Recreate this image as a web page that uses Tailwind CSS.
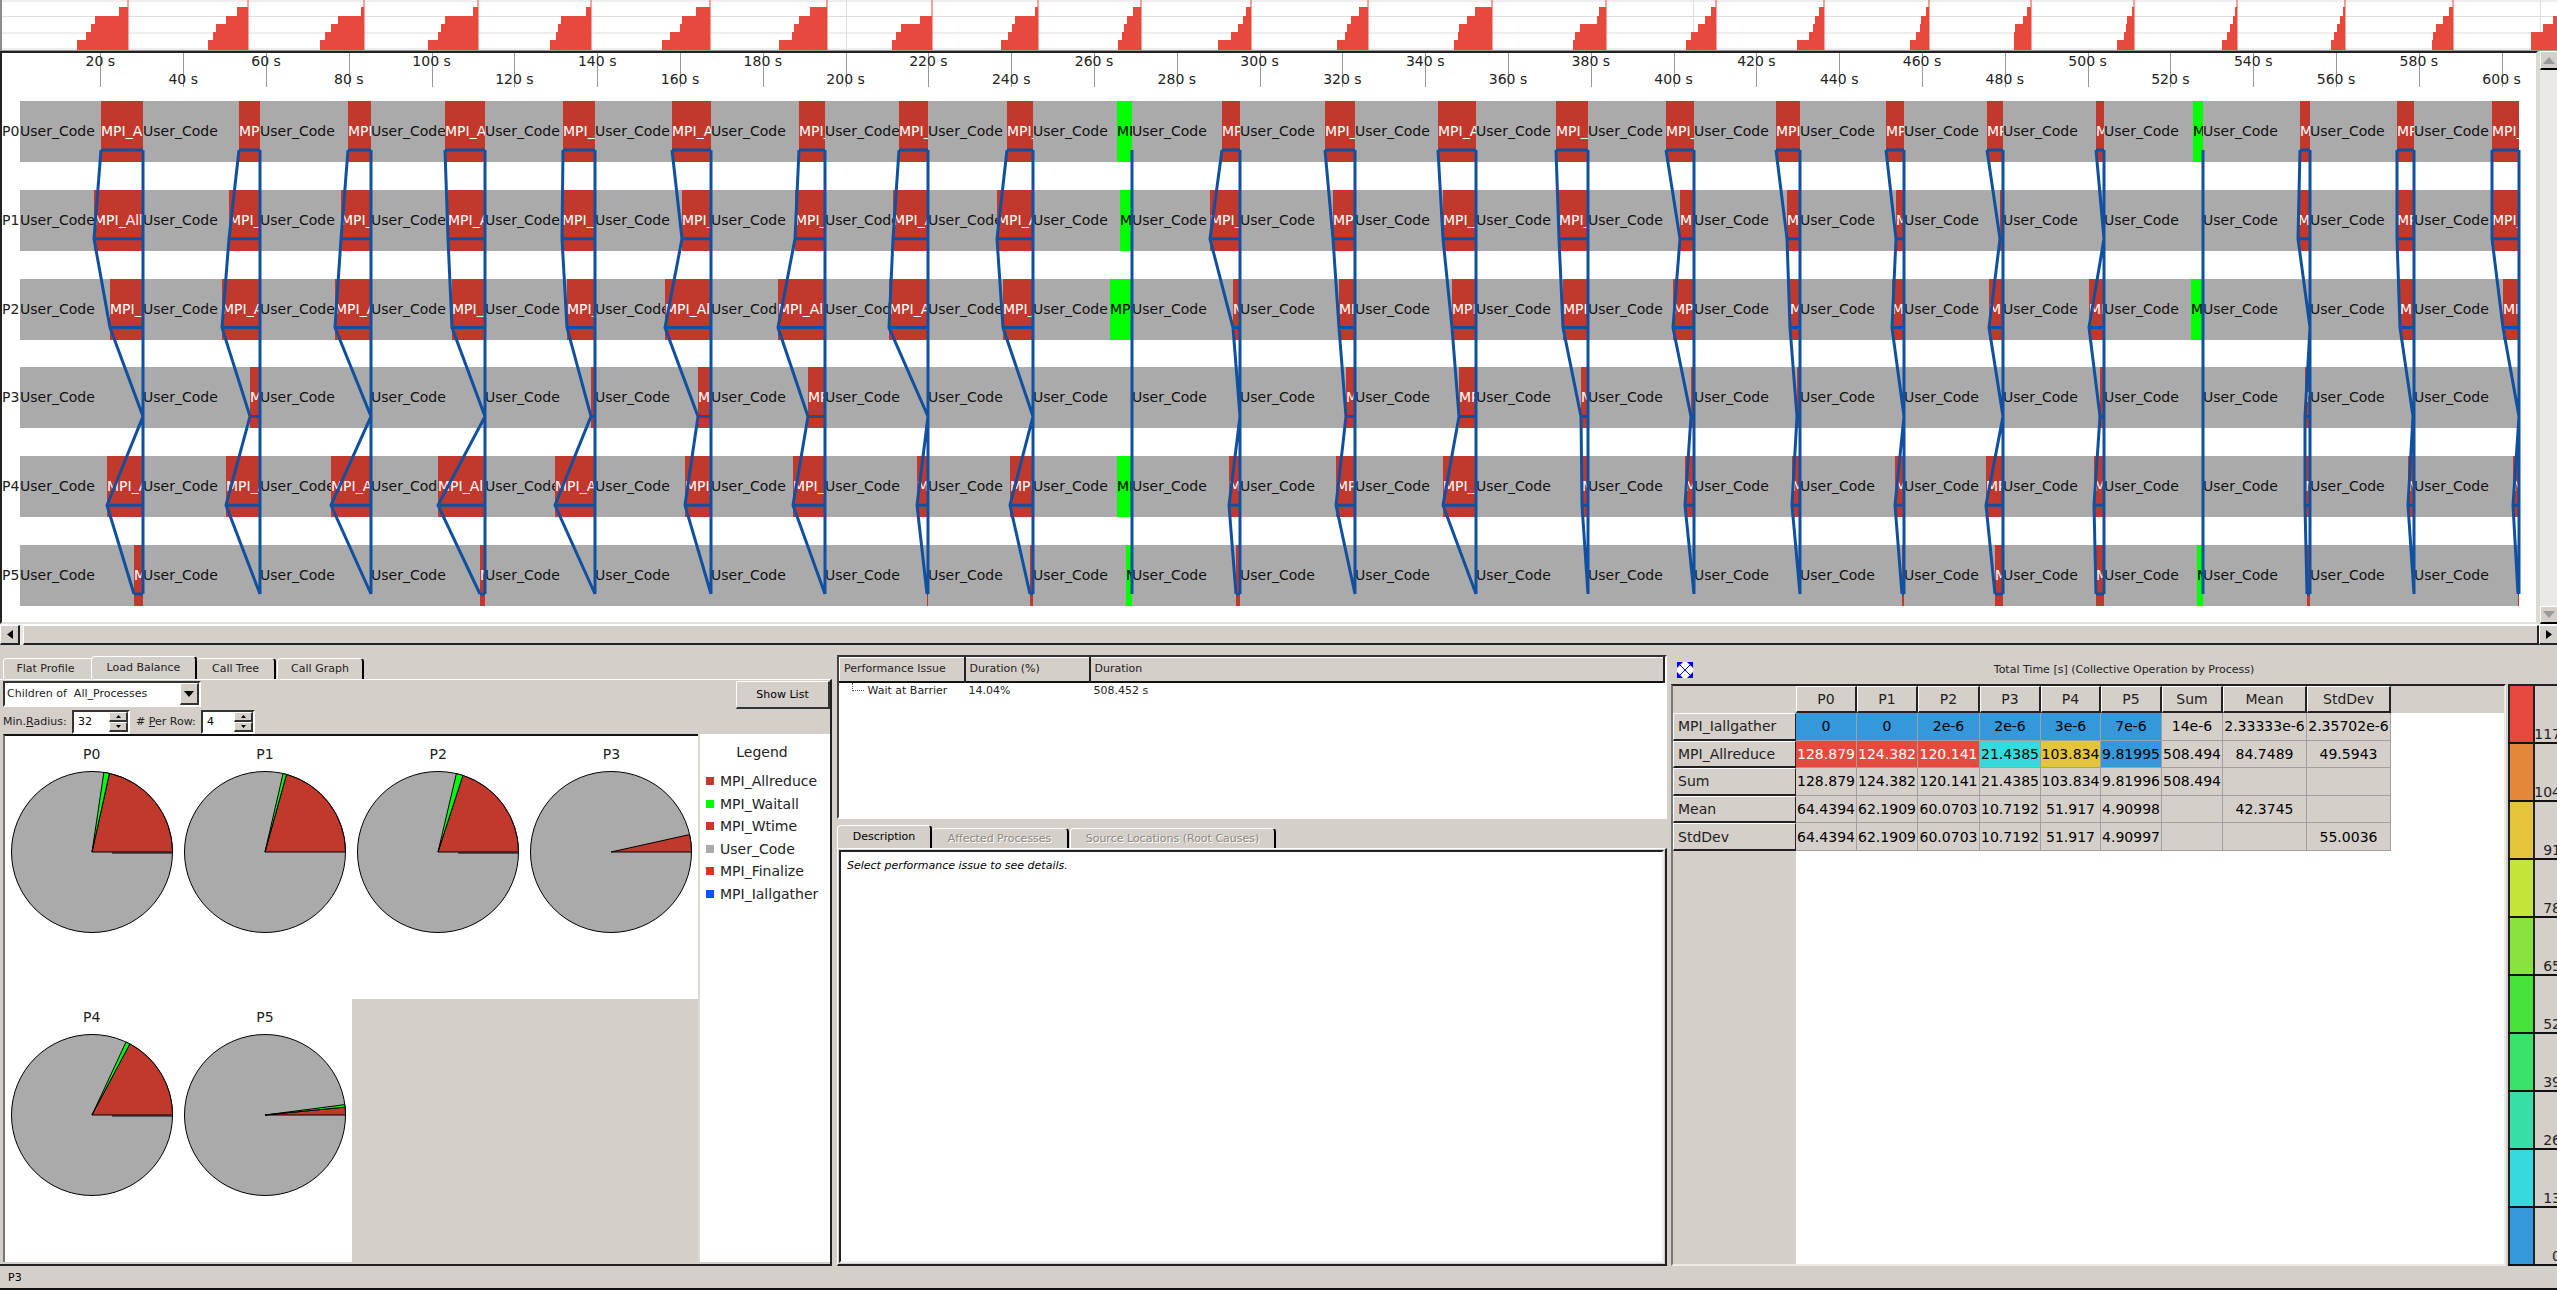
<!DOCTYPE html>
<html lang="en">
<head>
<meta charset="utf-8">
<title>Trace Analyzer</title>
<script src="https://cdn.jsdelivr.net/npm/@tailwindcss/browser@4"></script>
</head>
<body class="flex h-screen flex-col overflow-hidden bg-[#d4cfc8] font-['DejaVu_Sans',sans-serif] text-[11px] leading-4 text-black">

<!-- Load histogram -->
<section aria-label="Histogram" class="h-[51px] shrink-0 border-l-2 border-[#8c8c8c] border-b border-b-[#9a9a9a] bg-white">
  <svg id="histogram" class="block h-full w-full" viewBox="2 0 2555 50" preserveAspectRatio="none"></svg>
</section>

<!-- Event timeline -->
<section aria-label="Event timeline" class="flex h-[573px] shrink-0">
  <div class="relative min-w-0 flex-1 overflow-hidden border-l-2 border-t-2 border-b-2 border-r-2 border-l-[#222] border-t-[#222] border-b-[#e4e1db] border-r-[#dcd9d3] bg-white text-sm leading-4">
    <div id="axis" class="relative h-[48px]"></div>
    <div id="rows" class="flex h-[505px] flex-col justify-between"></div>
    <svg id="arrows" class="absolute inset-0 h-full w-full" viewBox="2 53 2534 569" preserveAspectRatio="none" fill="none" stroke="#1050a0" stroke-width="3"></svg>
  </div>
  <div class="flex w-[19px] flex-col border-l-2 border-[#dcd9d3] bg-[#ebe9e5]">
    <button aria-label="Scroll up" class="flex h-[19px] items-center justify-center border-b-2 border-l border-t border-b-black border-l-white border-t-white bg-[#d4cfc8]"><svg width="12" height="7"><path d="M6 0L12 7H0z" fill="#999"/></svg></button>
    <div class="flex-1"></div>
    <button aria-label="Scroll down" class="flex h-[18px] items-center justify-center border-b-2 border-l border-t border-b-black border-l-white border-t-white bg-[#d4cfc8]"><svg width="12" height="7"><path d="M0 0H12L6 7z" fill="#999"/></svg></button>
  </div>
</section>
<div class="flex h-[21px] shrink-0 border-t border-white">
  <button aria-label="Scroll left" class="flex w-[20px] items-center justify-center border-b-2 border-l border-r-2 border-t border-b-[#222] border-l-white border-r-[#222] border-t-white"><svg width="6" height="9"><path d="M6 0V9L0 4.5z"/></svg></button>
  <div class="w-[3px] bg-[#ebe9e5]"></div>
  <div class="flex-1 border-b-2 border-l border-r-2 border-t border-b-[#222] border-l-white border-r-[#222] border-t-white"></div>
  <button aria-label="Scroll right" class="flex w-[18px] items-center justify-center border-b-2 border-l border-t border-b-[#222] border-l-white border-t-white"><svg width="6" height="9"><path d="M0 0V9L6 4.5z"/></svg></button>
</div>

<!-- Lower panels -->
<main class="flex min-h-0 flex-1">

  <!-- Load balance -->
  <section class="flex w-[832px] shrink-0 flex-col pt-[11px]">
    <div role="tablist" class="flex h-[23px] items-end pl-[3px] text-[#222]">
      <button role="tab" class="h-[21px] w-[88px] rounded-tl border-l border-t border-white pr-1">Flat Profile</button>
      <button role="tab" aria-selected="true" class="h-[23px] w-[106px] rounded-t border-l border-r-2 border-t border-l-white border-r-black border-t-white">Load Balance</button>
      <button role="tab" class="h-[21px] w-[79px] rounded-t border-r-2 border-t border-r-black border-t-white">Call Tree</button>
      <button role="tab" class="ml-px h-[21px] w-[87px] rounded-t border-l border-r-2 border-t border-l-white border-r-black border-t-white">Call Graph</button>
    </div>
    <div class="flex min-h-0 flex-1 flex-col border-b-2 border-r-2 border-t border-b-[#222] border-r-[#222] border-t-white pt-px pl-[3px]">
      <div class="flex h-[28px] items-start justify-between">
        <div class="relative h-[26px] w-[198px] border-2 border-b-white border-l-[#333] border-r-white border-t-[#333] bg-white">
          <select aria-label="Scope" class="h-full w-full appearance-none bg-white pl-0.5 text-[#222]"><option>Children of&nbsp; All_Processes</option></select>
          <span class="pointer-events-none absolute inset-y-0 right-0 flex w-[19px] items-center justify-center border-b-2 border-l border-r-2 border-t border-b-[#333] border-l-white border-r-[#333] border-t-white bg-[#d4cfc8]"><svg width="10" height="6"><path d="M0 0H10L5 6z"/></svg></span>
        </div>
        <button class="h-[28px] w-[94px] border-b-2 border-l border-r-2 border-t border-b-[#333] border-l-white border-r-[#333] border-t-white">Show List</button>
      </div>
      <div class="flex h-[25px] items-center">
        <label for="radius" class="w-[69px] text-[#222]">Min.<u>R</u>adius:</label>
        <div class="flex h-[24px] w-[58px] border-2 border-b-white border-l-[#333] border-r-white border-t-[#333] bg-white">
          <input id="radius" value="32" class="min-w-0 flex-1 pl-1 outline-none">
          <div class="flex w-[19px] flex-col bg-[#d4cfc8]">
            <button aria-label="Increase radius" class="flex flex-1 items-center justify-center border-b-2 border-l border-r-2 border-t border-b-[#333] border-l-white border-r-[#333] border-t-white"><svg width="5" height="3"><path d="M2.500 0L5 3H0z"/></svg></button>
            <button aria-label="Decrease radius" class="flex flex-1 items-center justify-center border-b-2 border-l border-r-2 border-t border-b-[#333] border-l-white border-r-[#333] border-t-white"><svg width="5" height="3"><path d="M0 0H5L2.500 3z"/></svg></button>
          </div>
        </div>
        <label for="perrow" class="ml-1.5 w-[65px] text-[#222]"># <u>P</u>er Row:</label>
        <div class="flex h-[24px] w-[54px] border-2 border-b-white border-l-[#333] border-r-white border-t-[#333] bg-white">
          <input id="perrow" value="4" class="min-w-0 flex-1 pl-1 outline-none">
          <div class="flex w-[19px] flex-col bg-[#d4cfc8]">
            <button aria-label="Increase per row" class="flex flex-1 items-center justify-center border-b-2 border-l border-r-2 border-t border-b-[#333] border-l-white border-r-[#333] border-t-white"><svg width="5" height="3"><path d="M2.500 0L5 3H0z"/></svg></button>
            <button aria-label="Decrease per row" class="flex flex-1 items-center justify-center border-b-2 border-l border-r-2 border-t border-b-[#333] border-l-white border-r-[#333] border-t-white"><svg width="5" height="3"><path d="M0 0H5L2.500 3z"/></svg></button>
          </div>
        </div>
      </div>
      <div class="flex min-h-0 flex-1 pb-0.5">
        <div id="pies" class="grid flex-1 grid-cols-4 grid-rows-2 border-l-2 border-t-2 border-l-[#777] border-t-[#111] text-sm leading-4"></div>
        <aside class="w-[132px] border-l-2 border-[#dcd9d3] bg-white pt-2.5 text-sm leading-4 text-[#222]">
          <h2 class="pr-1.5 text-center">Legend</h2>
          <ul class="mt-2.5 grid h-[135px] grid-rows-6 items-center pl-1.5">
            <li class="flex items-center gap-1.5"><span class="size-2 bg-[#c1392d]"></span>MPI_Allreduce</li>
            <li class="flex items-center gap-1.5"><span class="size-2 bg-[#00ff00]"></span>MPI_Waitall</li>
            <li class="flex items-center gap-1.5"><span class="size-2 bg-[#d03428]"></span>MPI_Wtime</li>
            <li class="flex items-center gap-1.5"><span class="size-2 bg-[#aaaaaa]"></span>User_Code</li>
            <li class="flex items-center gap-1.5"><span class="size-2 bg-[#dc3224]"></span>MPI_Finalize</li>
            <li class="flex items-center gap-1.5"><span class="size-2 bg-[#0055ff]"></span>MPI_Iallgather</li>
          </ul>
        </aside>
      </div>
    </div>
  </section>

  <!-- Performance issues -->
  <section class="flex min-w-0 flex-1 flex-col pt-[10px] pl-[5px] pr-1">
    <div class="h-[164px] border-2 border-b-white border-l-[#444] border-r-white border-t-[#333] bg-white text-[#222]">
      <table class="w-full table-fixed border-collapse">
        <thead>
          <tr class="h-6 border-b-2 border-[#111] bg-[#d4cfc8] text-left">
            <th class="w-[125px] border-r-2 border-l border-t border-l-white border-r-[#222] border-t-white pl-1 font-normal">Performance Issue</th>
            <th class="w-[125px] border-r-2 border-t border-r-[#222] border-t-white pl-1 font-normal">Duration (%)</th>
            <th class="border-r-2 border-t border-r-[#222] border-t-white pl-1 font-normal">Duration</th>
          </tr>
        </thead>
        <tbody>
          <tr>
            <td><div class="flex pl-3"><span class="mr-1 h-2 w-3 border-b border-l border-dotted border-[#555]"></span>Wait at Barrier</div></td>
            <td class="pl-1">14.04%</td>
            <td class="pl-1">508.452 s</td>
          </tr>
        </tbody>
      </table>
    </div>
    <div role="tablist" class="mt-1.5 flex h-[23px] items-end">
      <button role="tab" aria-selected="true" class="h-[23px] w-[95px] rounded-t border-l border-r-2 border-t border-l-white border-r-black border-t-white">Description</button>
      <button role="tab" disabled class="h-[20px] w-[137px] rounded-t border-r-2 border-t border-r-black border-t-white text-[#8c8880] text-shadow-[1px_1px_0_#fff]">Affected Processes</button>
      <button role="tab" disabled class="ml-px h-[20px] w-[206px] rounded-t border-l border-r-2 border-t border-l-white border-r-black border-t-white text-[#8c8880] text-shadow-[1px_1px_0_#fff]">Source Locations (Root Causes)</button>
    </div>
    <div class="min-h-0 flex-1 border-b-2 border-l border-r-2 border-t border-b-[#222] border-l-white border-r-[#222] border-t-white p-px">
      <div class="h-full border-2 border-b-[#eee] border-l-[#222] border-r-[#eee] border-t-[#222] bg-white p-1.5 italic">Select performance issue to see details.</div>
    </div>
  </section>

  <!-- Collective operation matrix -->
  <section class="flex w-[886px] shrink-0 flex-col pt-[10px]">
    <header class="flex h-[29px] items-center pl-1.5">
      <button aria-label="Expand"><svg width="16" height="16" viewBox="0 0 16 16" class="bg-white"><g fill="#00f"><path d="M0 0h6l-2 2 0 0-2 2-2 2zM16 0v6l-2-2-2-2-2-2zM0 16v-6l2 2 2 2 2 2zM16 16h-6l2-2 2-2 2-2z"/></g><path d="M2 2L14 14M14 2L2 14" stroke="#00f" stroke-width="1"/></svg></button>
      <h2 class="flex-1 pr-0.5 text-center text-[#222]">Total Time [s] (Collective Operation by Process)</h2>
    </header>
    <div class="flex min-h-0 flex-1">
      <div class="flex min-w-0 flex-1 flex-col border-b-2 border-l-2 border-r-2 border-t-2 border-b-[#eceae6] border-l-[#777] border-r-[#eceae6] border-t-[#222] bg-[linear-gradient(to_right,#d4cfc8_123px,#fff_123px)]">
        <div class="bg-[linear-gradient(to_bottom,#d4cfc8_27px,transparent_27px)]">
        <table class="h-[165px] w-[718px] table-fixed border-separate border-spacing-0 text-center text-sm leading-4">
          <colgroup><col class="w-[123px]"><col class="w-[61px]"><col class="w-[61px]"><col class="w-[62px]"><col class="w-[61px]"><col class="w-[60px]"><col class="w-[61px]"><col class="w-[61px]"><col class="w-[84px]"><col class="w-[84px]"></colgroup>
          <thead><tr id="mhead" class="h-[27px]"></tr></thead>
          <tbody id="mbody"></tbody>
        </table>
        </div>
      </div>
      <div id="scale" class="ml-0.5 flex w-[49px] flex-col overflow-hidden border-t-2 border-[#222] text-sm leading-4"></div>
    </div>
  </section>
</main>

<footer class="h-[24px] shrink-0 border-b-2 border-[#111] px-2 pt-1">P3</footer>

<script>
const P = 6;
// Synchronisation points: [end, [start per process], waitall?]
const events = [
  [143,[101,94,110,143,107,134]],
  [260,[239,229,222,250,226,260]],
  [371,[348,341,335,371,331,371]],
  [485,[445,448,452,485,438,480]],
  [595,[563,562,567,591,555,595]],
  [711,[672,682,665,698,685,711]],
  [825,[799,795,778,808,793,825]],
  [928,[899,893,889,928,917,927]],
  [1033,[1007,997,1003,1033,1010,1030]],
  [1132,[1117,1120,1110,1132,1117,1126],1],
  [1240,[1222,1210,1233,1240,1229,1236]],
  [1355,[1325,1333,1339,1346,1336,1355]],
  [1476,[1438,1443,1452,1459,1443,1476]],
  [1588,[1556,1559,1563,1581,1582,1588]],
  [1694,[1666,1680,1673,1691,1685,1694]],
  [1800,[1776,1787,1790,1797,1792,1800]],
  [1904,[1886,1896,1892,1904,1895,1902]],
  [2003,[1987,2000,1989,2003,1986,1995]],
  [2104,[2096,2104,2089,2100,2094,2096]],
  [2203,[2193,2203,2191,2203,2202,2197],1],
  [2310,[2300,2298,2310,2305,2305,2307]],
  [2414,[2397,2397,2400,2413,2408,2414]],
  [2519,[2492,2492,2503,2519,2513,2518]]
];
const pct = x => ((x - 2) / 2534 * 100) + '%';
const wid = w => (w / 2534 * 100) + '%';

// Time axis
let ax = '';
for (let i = 1; i <= 30; i++) {
  const x = 100.4 + (i - 1) * 82.8;
  ax += `<div class="absolute top-0 h-[34px] w-px bg-[#999]" style="left:${pct(x)}"></div>
         <div class="${i % 2 ? 'absolute top-0 -translate-x-1/2 whitespace-nowrap text-[#222]' : 'absolute top-[18px] -translate-x-1/2 whitespace-nowrap text-[#222]'}" style="left:${pct(x)}">${i * 20} s</div>`;
}
document.getElementById('axis').innerHTML = ax;

// Process rows
const seg = (a, b, cls, text) => b <= a ? '' :
  `<div class="absolute inset-y-0 overflow-hidden whitespace-nowrap leading-[61px] ${cls}" style="left:${pct(a)};width:${wid(b - a)}">${b - a > 4 ? text : ''}</div>`;
let rows = '';
for (let p = 0; p < P; p++) {
  let s = seg(20, 2519, 'bg-[#aaaaaa]', ''), prev = 20;
  for (const [end, starts, w] of events) {
    s += seg(prev, starts[p], 'bg-[#aaaaaa] text-[#111]', 'User_Code');
    s += w ? seg(starts[p], end, 'bg-[#00ff00] text-black', 'MPI_Waitall')
           : seg(starts[p], end, 'bg-[#c1392d] text-white', 'MPI_Allreduce');
    prev = end;
  }
  rows += `<div class="relative h-[61px] leading-[61px]"><span class="text-[#222]">P${p}</span>${s}</div>`;
}
document.getElementById('rows').innerHTML = rows;

// Collective operation outlines
const ly = p => 150 + p * 88.8;
let d = '';
for (const [end, starts, w] of events) {
  d += `M${end} ${ly(0)}V${ly(5)}`;
  if (w) continue;
  starts.forEach((x, p) => { d += `M${x} ${ly(p)}H${end}`; });
  d += 'M' + starts.map((x, p) => `${x} ${ly(p)}`).join('L');
}
document.getElementById('arrows').innerHTML = `<path d="${d}" vector-effect="non-scaling-stroke"/>`;

// Histogram: step positions at rising levels, then the end
const hist = [
  [77,86,91,95,119,128],[208,213,216,226,237,248],[320,325,331,338,361,364],[428,438,441,445,473,478],
  [550,556,558,561,586,591],[662,670,680,682,696,710],[779,792,794,799,810,827],[892,896,901,920,932,932],
  [1001,1008,1012,1015,1035,1038],[1118,1122,1124,1127,1133,1141],[1218,1231,1238,1243,1246,1251],
  [1337,1345,1347,1351,1359,1368],[1454,1458,1459,1467,1475,1492],[1573,1575,1580,1597,1599,1606],
  [1686,1691,1698,1705,1711,1716],[1797,1809,1813,1815,1819,1824],[1910,1916,1920,1921,1926,1929],
  [2014,2014,2015,2023,2027,2031],[2117,2124,2126,2127,2132,2134],[2222,2227,2230,2233,2235,2237],
  [2331,2334,2337,2340,2343,2345],[2432,2433,2436,2443,2449,2453],[2531,2531,2543,2553,2557,2558]
];
const lev = [40, 32, 24, 16, 7];
let h = '<path d="M0 1H2557M0 16.500H2557M0 33H2557M0 49H2557M846.500 0V50M1693.500 0V50M2540.500 0V50" stroke="#ddd" fill="none"/>';
for (const st of hist) {
  let q = `M${st[0]} 50`;
  for (let i = 0; i < 5; i++) q += `V${lev[i]}H${st[i + 1]}`;
  h += `<path d="${q}V50z" fill="#e74a3d"/><path d="M${st[5]} 0V50" stroke="#e74a3d"/>`;
}
document.getElementById('histogram').innerHTML = h;

// Pies: [name, red end angle, green end angle, has closing sliver]
const pies = [['P0',77.5,81.5,1],['P1',74.5,77,0],['P2',72,76.8,1],['P3',12.5,12.5,0],['P4',62,65,1],['P5',5.6,7.4,0]];
const pt = a => { const r = a * Math.PI / 180; return (82 + 80.5 * Math.cos(r)).toFixed(2) + ' ' + (82 - 80.5 * Math.sin(r)).toFixed(2); };
const slice = (a, b, c) => `<path d="M82 82L${pt(a)}A80.5 80.5 0 0 0 ${pt(b)}z" fill="${c}" stroke="#000"/>`;
document.getElementById('pies').innerHTML = pies.map(([n, r, g, t]) => `
  <figure class="flex flex-col items-center bg-white pt-2.5"><figcaption class="mb-2 text-[#222]">${n}</figcaption>
  <svg width="164" height="164" class="shrink-0"><circle cx="82" cy="82" r="80.5" fill="#aaa" stroke="#000"/>
  ${slice(0, r, '#c1392d')}${g > r ? slice(r, g, '#00ff00') : ''}${t ? '<path d="M102 83H163" stroke="#000" stroke-width="1"/>' : ''}</svg></figure>`).join('');

// Matrix
const heads = ['P0','P1','P2','P3','P4','P5','Sum','Mean','StdDev'];
document.getElementById('mhead').innerHTML = '<td></td>' + heads.map(t =>
  `<th class="border-b-2 border-l border-r-2 border-t border-b-[#222] border-l-white border-r-[#222] border-t-white font-normal text-[#222]">${t}</th>`).join('');
const B = 'bg-[#3498db]', R = 'bg-[#e74a3d] text-white', C = 'bg-[#35dade]', Y = 'bg-[#e3c43b]';
const data = [
  ['MPI_Iallgather',['0','0','2e-6','2e-6','3e-6','7e-6','14e-6','2.33333e-6','2.35702e-6'],[B,B,B,B,B,B]],
  ['MPI_Allreduce',['128.879','124.382','120.141','21.4385','103.834','9.81995','508.494','84.7489','49.5943'],[R,R,R,C,Y,B]],
  ['Sum',['128.879','124.382','120.141','21.4385','103.834','9.81996','508.494','',''],[]],
  ['Mean',['64.4394','62.1909','60.0703','10.7192','51.917','4.90998','','42.3745',''],[]],
  ['StdDev',['64.4394','62.1909','60.0703','10.7192','51.917','4.90997','','','55.0036'],[]]
];
document.getElementById('mbody').innerHTML = data.map(([n, v, c]) => `<tr>
  <th class="border-b-2 border-l border-r border-t border-b-[#222] border-l-white border-r-[#222] border-t-white pl-1 text-left font-normal text-[#222]">${n}</th>
  ${v.map((x, i) => `<td class="border-b border-r border-[#a0a0a4] ${c[i] || 'bg-[#d4cfc8]'}">${x}</td>`).join('')}</tr>`).join('');

// Colour scale
const scale = [['#e74a3d',117],['#e3873b',104],['#e3c43b',91],['#c3e43b',78],['#86e33b',65],['#46e238',52],['#3ae26a',39],['#37dfa6',26],['#36dade',13],['#3498db',0]];
document.getElementById('scale').innerHTML = scale.map(([c, n]) => `
  <div class="flex min-h-0 flex-1 border-b-2 border-[#111]"><div class="w-[27px] shrink-0 border-l-2 border-r-2 border-[#222]" style="background:${c}"></div>
  <div class="-mr-1 flex min-w-0 flex-1 items-end justify-end text-[#222]">${n}</div></div>`).join('');
</script>
</body>
</html>
